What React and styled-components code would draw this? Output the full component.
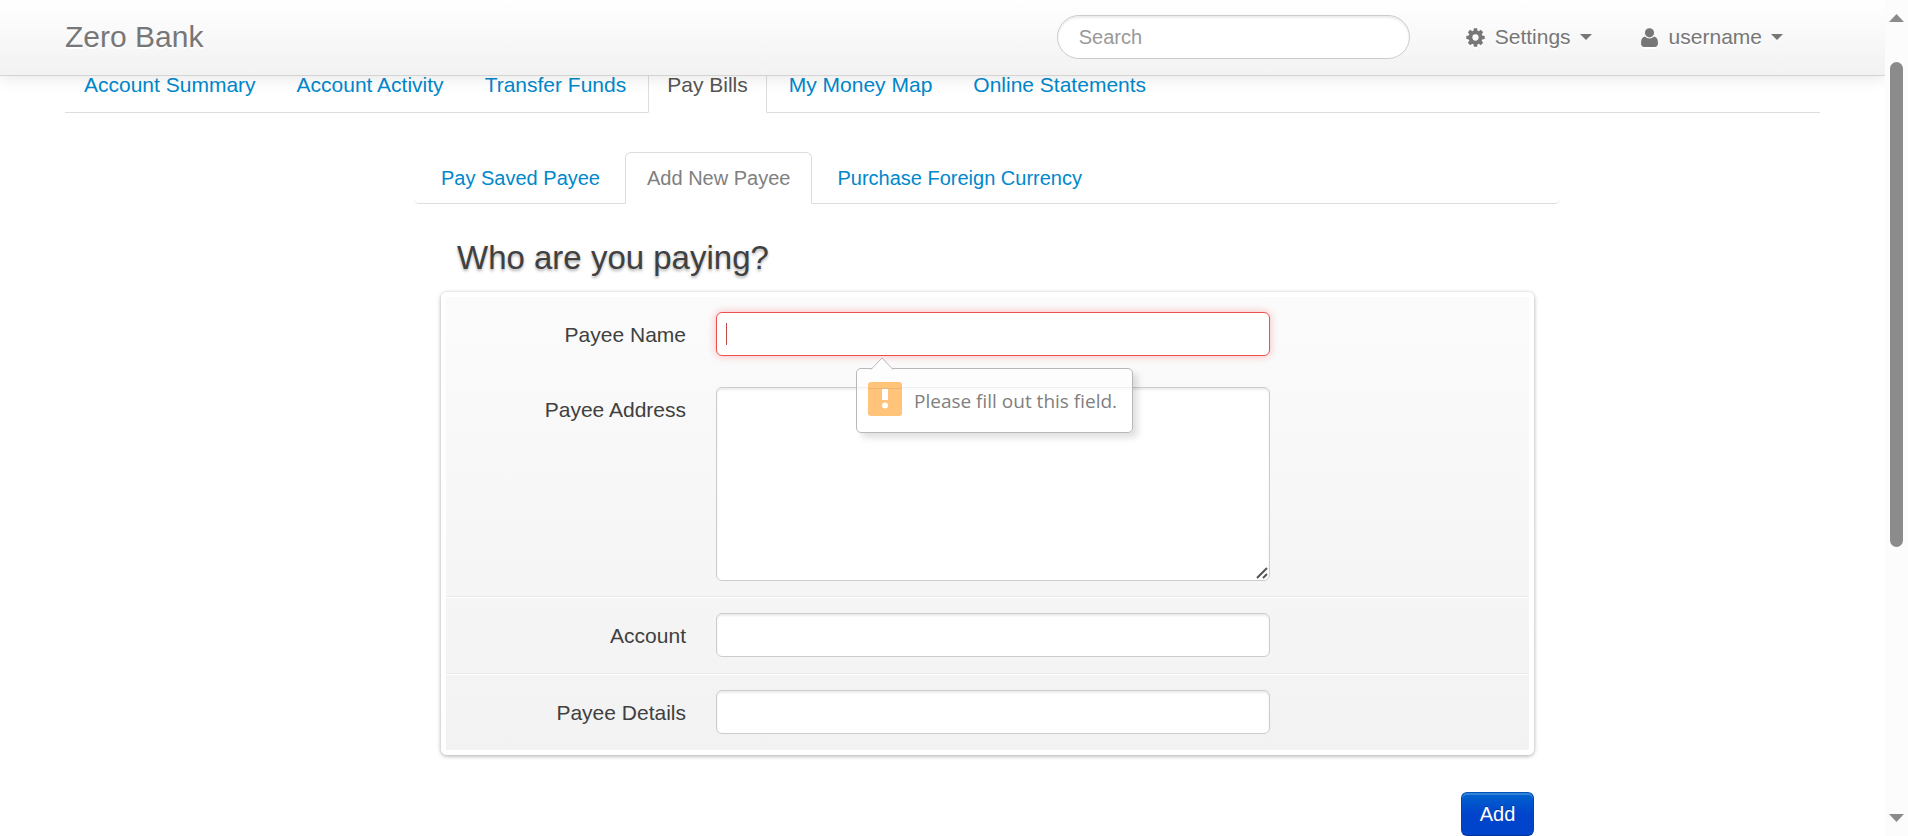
import React from "react";
import styled, { createGlobalStyle, css } from "styled-components";

const GlobalStyle = createGlobalStyle`
  *, *::before, *::after { box-sizing: border-box; }
  body {
    margin: 0;
    background: #fff;
    color: #404040;
    font-family: "Liberation Sans", Arial, sans-serif;
    font-size: 21px;
    line-height: 30px;
  }
  input, textarea, button { font-family: inherit; }
`;

const Shell = styled.div`
  display: grid;
  grid-template-columns: minmax(0, 1fr) 23px;
  min-height: 100vh;
`;

const Page = styled.div`
  min-width: 0;
  overflow: hidden;
`;

const Container = styled.div`
  max-width: 1755px;
  margin: 0 auto;
`;

const Navbar = styled.header`
  position: relative;
  z-index: 2;
  background: linear-gradient(#fff, #f2f2f2);
  border-bottom: 1px solid #d4d4d4;
  box-shadow: 0 2px 15px rgba(0, 0, 0, 0.1);
`;

const NavbarInner = styled(Container)`
  display: flex;
  align-items: center;
  height: 75px;
  padding-bottom: 1px;
`;

const Brand = styled.a`
  margin-right: auto;
  font-size: 30px;
  color: #777;
  text-decoration: none;
  text-shadow: 0 2px 0 #fff;
`;

const SearchInput = styled.input`
  width: 353px;
  height: 44px;
  padding: 0 21px;
  border: 1px solid #ccc;
  border-radius: 22px;
  background: #fff;
  box-shadow: inset 0 2px 2px rgba(0, 0, 0, 0.075);
  font-size: 20px;
  color: #555;
  outline: none;
  &::placeholder { color: #999; opacity: 1; }
`;

const UserMenu = styled.nav`
  display: flex;
  gap: 49px;
  margin: 0 37px 0 56px;
`;

const MenuButton = styled.button`
  display: flex;
  align-items: center;
  padding: 0;
  border: 0;
  background: none;
  font-size: 21px;
  line-height: 30px;
  color: #777;
  text-shadow: 0 2px 0 #fff;
  svg { margin-right: 10px; filter: drop-shadow(0 2px 0 #fff); }
  &::after {
    content: "";
    margin-left: 9px;
    border: 6px solid transparent;
    border-top-color: currentColor;
    border-bottom: 0;
  }
`;

const TabBar = styled.nav`
  display: flex;
  gap: 3px;
  border-bottom: 1px solid #ddd;
  ${(p) =>
    p.$compact
      ? css`
          padding-left: 5px;
          border-radius: 5px;
          font-size: 20px;
        `
      : css`
          margin-top: -19px;
        `}
`;

const Tab = styled.a`
  margin-bottom: -1px;
  padding: ${(p) => (p.$compact ? "10px 21px" : "12px 18px")};
  border: 1px solid transparent;
  border-radius: 6px 6px 0 0;
  color: #08c;
  text-decoration: none;
  ${(p) =>
    p.$active &&
    css`
      background: #fff;
      border-color: #ddd #ddd #fff;
      color: ${p.$compact ? "#808080" : "#555"};
    `}
`;

const Board = styled.main`
  margin: 39px 260px 0 349px;
`;

const Form = styled.form`
  margin: 0 26px 0 27px;
`;

const Title = styled.h2`
  margin: 0;
  padding: 32px 16px 12px;
  font-size: 33px;
  line-height: 44px;
  font-weight: 400;
  color: #404040;
  text-shadow: 0 2px 3px rgba(0, 0, 0, 0.3);
`;

const Panel = styled.div`
  border: 5px solid #fff;
  border-radius: 6px;
  background: linear-gradient(#fbfbfb, #f2f2f2) padding-box;
  box-shadow: 0 1px 4px rgba(0, 0, 0, 0.35);
`;

const Row = styled.div`
  display: grid;
  grid-template-columns: 240px minmax(0, 554px);
  column-gap: 30px;
  padding: 15px 0 ${(p) => (p.$ruled ? 16 : 15)}px;
  border-top: 1px solid ${(p) => (p.$ruled ? "#fff" : "transparent")};
  & + & { border-bottom: 1px solid #eaeaea; }
  &:first-child { border-top: 0; }
  &:last-child { border-bottom: 0; }
`;

const Label = styled.label`
  padding-top: 8px;
  text-align: right;
`;

const Control = styled.div`
  position: relative;
  display: flex;
`;

const field = css`
  width: 100%;
  padding: 6px 9px;
  border: 1px solid #ccc;
  border-radius: 6px;
  background: #fff;
  box-shadow: inset 0 2px 2px rgba(0, 0, 0, 0.075);
  font-size: 20px;
  color: #555;
  outline: none;
`;

const TextInput = styled.input`
  ${field}
  height: 44px;
  ${(p) =>
    p.$invalid &&
    css`
      border-color: #e9524f;
      color: #b94a48;
      box-shadow: 0 0 9px #f8b9b7;
    `}
`;

const TextArea = styled.textarea`
  ${field}
  display: block;
  height: 194px;
  resize: vertical;
  &::-webkit-resizer { background: transparent; }
`;

const Grip = styled.svg`
  position: absolute;
  right: 2px;
  bottom: 2px;
  pointer-events: none;
`;

const Caret = styled.span`
  position: absolute;
  left: 10px;
  top: 11px;
  width: 1px;
  height: 22px;
  background: #b94a48;
`;

const Bubble = styled.div`
  position: absolute;
  z-index: 1;
  left: 140px;
  top: 56px;
  display: flex;
  align-items: center;
  width: 277px;
  height: 65px;
  padding: 0 11px;
  border: 1px solid #b8b8b8;
  border-radius: 5px;
  background: rgba(255, 255, 255, 0.7);
  box-shadow: 5px 5px 6px rgba(0, 0, 0, 0.12);
  font-family: "Open Sans", "Noto Sans", sans-serif;
  font-size: 19px;
  color: #808080;
  white-space: nowrap;
`;

const BubbleArrow = styled.svg`
  position: absolute;
  left: 13px;
  top: -12px;
`;

const BubbleIcon = styled.svg`
  flex: none;
  margin: 0 12px 4px 0;
`;

const Actions = styled.div`
  display: flex;
  justify-content: flex-end;
  padding-top: 37px;
`;

const SubmitButton = styled.button`
  width: 73px;
  height: 44px;
  padding: 0;
  border: 1px solid;
  border-color: #0055b8 #0044b0 #00339a;
  border-radius: 6px;
  background: linear-gradient(#0064cd, #0044cc 50%);
  box-shadow: inset 0 2px 0 rgba(255, 255, 255, 0.2);
  font-size: 20px;
  color: #fff;
  text-shadow: 0 -1px 0 rgba(0, 0, 0, 0.25);
`;

const ScrollTrack = styled.div`
  display: flex;
  flex-direction: column;
  align-items: center;
  padding: 14px 0;
  background: #fcfcfc;
  color: #8b8b8b;
`;

const ScrollThumb = styled.div`
  width: 13px;
  height: 485px;
  margin: 40px 0 auto;
  border-radius: 7px;
  background: #8b8b8b;
`;

const teeth = [0, 45, 90, 135, 180, 225, 270, 315];

const CogIcon = () => (
  <svg width="19" height="19" viewBox="-10 -10 20 20" fill="currentColor" aria-hidden="true">
    {teeth.map((a) => (
      <path key={a} d="M-2.4-6 L-1.7-9.7 H1.7 L2.4-6Z" transform={`rotate(${a})`} />
    ))}
    <circle r="5.3" fill="none" stroke="currentColor" strokeWidth="4" />
  </svg>
);

const UserIcon = () => (
  <svg width="18" height="19" viewBox="0 0 18 19" fill="currentColor" aria-hidden="true">
    <circle cx="8.5" cy="4.8" r="4.6" />
    <path d="M4 8.6C1.2 9 0 11.500 0 15.200C0 17.500 1.200 19 3.200 19H13.800C15.800 19 17 17.500 17 15.200C17 11.500 15.800 9 13 8.600C11.800 9.900 10.300 10.500 8.500 10.500C6.700 10.500 5.200 9.900 4 8.600Z" />
  </svg>
);

const Arrow = ({ down }) => (
  <svg width="15" height="8" viewBox="0 0 15 8" fill="currentColor" aria-hidden="true">
    <path d={down ? "M0 0H15L7.500 8Z" : "M0 8H15L7.500 0Z"} />
  </svg>
);

const mainTabs = [
  "Account Summary",
  "Account Activity",
  "Transfer Funds",
  "Pay Bills",
  "My Money Map",
  "Online Statements",
];
const payTabs = ["Pay Saved Payee", "Add New Payee", "Purchase Foreign Currency"];

function Tabs({ items, active, compact }) {
  return (
    <TabBar $compact={compact}>
      {items.map((t) => (
        <Tab key={t} href="#" $active={t === active} $compact={compact}>
          {t}
        </Tab>
      ))}
    </TabBar>
  );
}

export default function App() {
  return (
    <Shell>
      <GlobalStyle />
      <Page>
        <Navbar>
          <NavbarInner>
            <Brand href="#">Zero Bank</Brand>
            <SearchInput type="text" placeholder="Search" aria-label="Search" />
            <UserMenu>
              <MenuButton type="button"><CogIcon />Settings</MenuButton>
              <MenuButton type="button"><UserIcon />username</MenuButton>
            </UserMenu>
          </NavbarInner>
        </Navbar>
        <Container>
          <Tabs items={mainTabs} active="Pay Bills" />
          <Board>
            <Tabs items={payTabs} active="Add New Payee" compact />
            <Form onSubmit={(e) => e.preventDefault()}>
              <Title>Who are you paying?</Title>
              <Panel>
                <Row>
                  <Label htmlFor="name">Payee Name</Label>
                  <Control>
                    <TextInput id="name" type="text" required $invalid />
                    <Caret />
                    <Bubble role="alert">
                      <BubbleArrow width="24" height="13" viewBox="0 0 24 13" aria-hidden="true">
                        <path d="M1 12.500L12 1L23 12.500" fill="#fdfdfd" stroke="#b8b8b8" />
                      </BubbleArrow>
                      <BubbleIcon width="34" height="34" viewBox="0 0 34 34" aria-hidden="true">
                        <rect width="34" height="34" rx="3" fill="#ffc37a" />
                        <path d="M0 6.500H34" stroke="#e9b574" />
                        <path d="M14 7H20V18H14Z" fill="#fff" />
                        <circle cx="17" cy="23.500" r="3" fill="#fff" />
                      </BubbleIcon>
                      Please fill out this field.
                    </Bubble>
                  </Control>
                </Row>
                <Row>
                  <Label htmlFor="address">Payee Address</Label>
                  <Control>
                    <TextArea id="address" />
                    <Grip width="12" height="12" viewBox="0 0 12 12" aria-hidden="true">
                      <path d="M1 11L11 1M7 11L11 7" stroke="#555" strokeWidth="2" />
                    </Grip>
                  </Control>
                </Row>
                <Row $ruled>
                  <Label htmlFor="account">Account</Label>
                  <Control><TextInput id="account" type="text" /></Control>
                </Row>
                <Row $ruled>
                  <Label htmlFor="details">Payee Details</Label>
                  <Control><TextInput id="details" type="text" /></Control>
                </Row>
              </Panel>
              <Actions>
                <SubmitButton type="submit">Add</SubmitButton>
              </Actions>
            </Form>
          </Board>
        </Container>
      </Page>
      <ScrollTrack aria-hidden="true">
        <Arrow />
        <ScrollThumb />
        <Arrow down />
      </ScrollTrack>
    </Shell>
  );
}
